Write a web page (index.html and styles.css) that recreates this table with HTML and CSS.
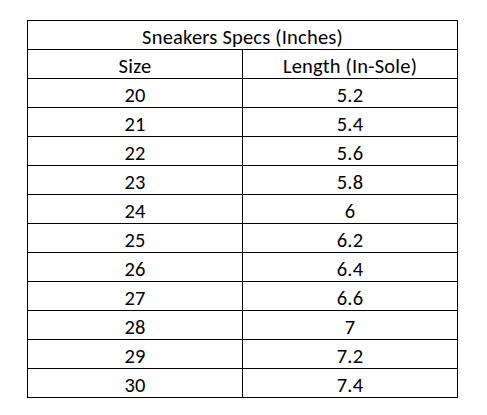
FILE: index.html
```html
<!DOCTYPE html>
<html>
<head>
<meta charset="utf-8">
<link rel="stylesheet" href="styles.css">
</head>
<body>
<div class="specs">
  <div class="cell title">Sneakers Specs (Inches)</div>
  <div class="cell">Size</div><div class="cell">Length (In-Sole)</div>
  <div class="cell">20</div><div class="cell">5.2</div>
  <div class="cell">21</div><div class="cell">5.4</div>
  <div class="cell">22</div><div class="cell">5.6</div>
  <div class="cell">23</div><div class="cell">5.8</div>
  <div class="cell">24</div><div class="cell">6</div>
  <div class="cell">25</div><div class="cell">6.2</div>
  <div class="cell">26</div><div class="cell">6.4</div>
  <div class="cell">27</div><div class="cell">6.6</div>
  <div class="cell">28</div><div class="cell">7</div>
  <div class="cell">29</div><div class="cell">7.2</div>
  <div class="cell">30</div><div class="cell">7.4</div>
</div>
</body>
</html>
```
FILE: styles.css
```css
html, body {
  margin: 0;
  padding: 0;
  background: #fff;
}
body {
  padding: 20px 0 0 27px;
}
.specs {
  display: grid;
  grid-template-columns: 214px 214px;
  grid-auto-rows: 28px;
  gap: 1px;
  padding: 1px;
  background: #000;
  width: 429px;
  font-family: Carlito, Lato, "Liberation Sans", sans-serif;
  font-size: 20.5px;
  letter-spacing: 0.2px;
  color: #000;
}
.cell {
  background: #fff;
  text-align: center;
  line-height: 28px;
  padding-top: 2px;
  box-sizing: border-box;
  white-space: nowrap;
  overflow: hidden;
}
.title {
  grid-column: 1 / 3;
}
```
